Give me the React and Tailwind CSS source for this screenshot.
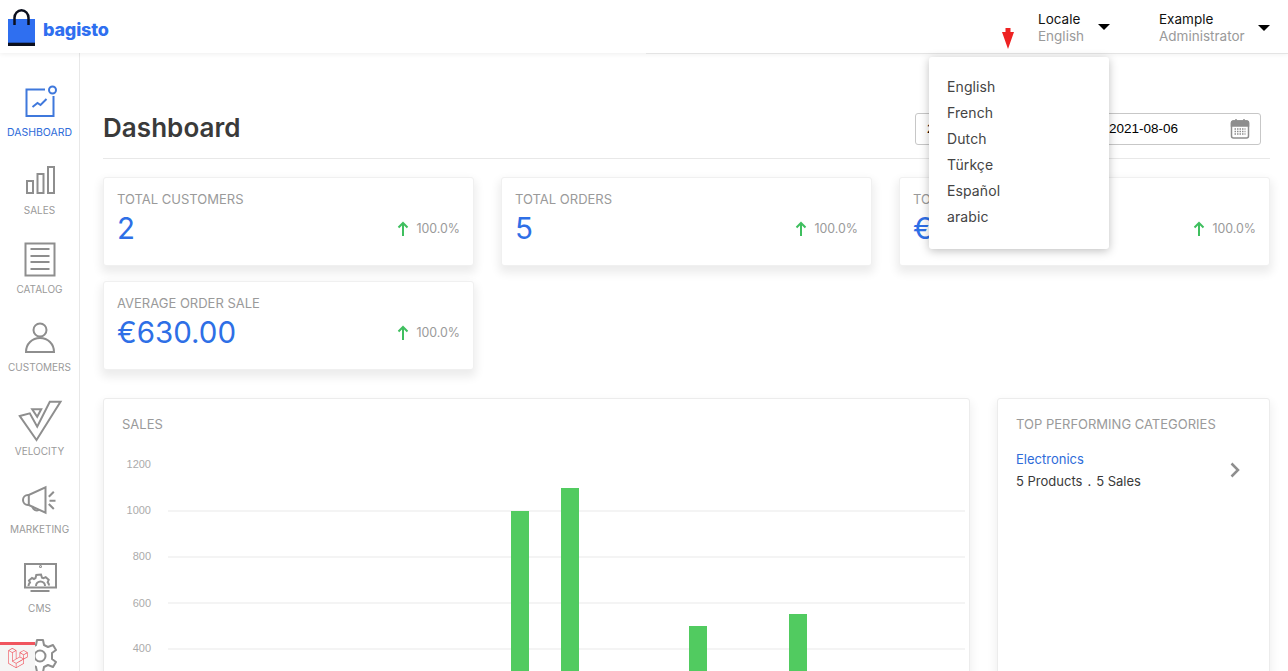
import { SiLaravel } from "react-icons/si";

const gray = "#8e8e8e";

function Ico({ children, color = gray, sw = 2 }) {
  return (
    <svg width="48" height="48" viewBox="0 0 48 48" fill="none" stroke={color} strokeWidth={sw}>
      {children}
    </svg>
  );
}

const navItems = [
  { label: "DASHBOARD", cls: "mt-[25px] text-[#2e6bd9]", text: "text-[10.500px] mt-px", icon: (
    <Ico color="#3f78dc">
      <path d="M29 11.500H10.500V38H37.500V18" />
      <circle cx="36.500" cy="12" r="3.500" />
      <path d="M16.500 29l5-4 3 2 6-6" />
    </Ico>) },
  { label: "SALES", cls: "mt-[17px] text-[#9a9a9a]", text: "text-[10px]", icon: (
    <Ico>
      <rect x="11" y="25" width="6" height="12" />
      <rect x="21.500" y="18" width="6" height="19" />
      <rect x="32" y="11" width="6" height="26" />
    </Ico>) },
  { label: "CATALOG", cls: "mt-[19px] text-[#9a9a9a]", text: "text-[10px]", icon: (
    <Ico>
      <rect x="9.500" y="8.500" width="29" height="32" />
      <path d="M14.500 14h19M14.500 21h19M14.500 27h19M14.500 34h19" />
    </Ico>) },
  { label: "CUSTOMERS", cls: "mt-[18px] text-[#9a9a9a]", text: "text-[10px]", icon: (
    <Ico>
      <circle cx="24" cy="17" r="6.500" />
      <path d="M10 39h28c0-8-6-14-14-14s-14 6-14 14z" />
    </Ico>) },
  { label: "VELOCITY", cls: "mt-[24px] text-[#9a9a9a]", text: "text-[10px]", icon: (
    <Ico>
      <path d="M3.800 19l10-2.700 7.400 13.400L33.800 4.700h10.700L20.500 43z" />
      <path d="M16.200 12.300h9l-4 7.400z" />
    </Ico>) },
  { label: "MARKETING", cls: "mt-[18px] text-[#9a9a9a]", text: "text-[10px]", icon: (
    <Ico>
      <path d="M29.500 12.300V37.700L12.800 30H12a5 5 0 0 1 0-10h.8z" />
      <path d="M12.800 20v10" />
      <path d="M16.200 31c.5 3.500 4 5.500 6.600 4" />
      <path d="M32.800 21.700l5-5M33.500 25.700h6M32.800 29l5 5" />
    </Ico>) },
  { label: "CMS", cls: "mt-[18px] text-[#9a9a9a]", text: "text-[10px] mt-px", icon: (
    <Ico>
      <rect x="9" y="11" width="31" height="23.500" />
      <path d="M14.500 38h19" />
      <path d="M12.500 33c0-2 .5-2.500 1.500-3.500l-1-2 3-2.500 2 1 1.500-.8.8-3.200 4.700-.5 1 3.200 1.500.5 2.200-1 3 2.500-1 2.500c.8.800 1.300 1.500 1.300 3.300" />
      <path d="M20 33a4.500 4.500 0 0 1 9 0" />
      <circle cx="24.500" cy="13.500" r=".5" />
    </Ico>) },
];

function NavItem({ label, cls, text, icon }) {
  return (
    <div className={`flex flex-col items-center ${cls}`}>
      <div className="h-12 w-12 flex items-center justify-center">{icon}</div>
      <div className={`${text} leading-3 whitespace-nowrap`}>{label}</div>
    </div>
  );
}

function Stat({ title, value }) {
  return (
    <div className="relative h-[89px] bg-white rounded-[3px] border border-[#f0f0f0] shadow-[0_5px_10px_2px_rgba(0,0,0,0.08)] px-[13px] pt-[12px]">
      <div className="text-[13px] leading-[18px] text-[#9a9a9a] whitespace-nowrap">{title}</div>
      <div className="flex items-center justify-between">
        <div className="text-[29.500px] leading-[40px] text-[#2e6fe6]">{value}</div>
        <div className="flex items-center gap-[7px] text-[12.400px] text-[#9a9a9a] mt-[3px]">
          <svg width="12" height="16" viewBox="0 0 12 16" fill="none" stroke="#3fbf5f" strokeWidth="2">
            <path d="M6 15V2M1.500 6.500L6 2l4.500 4.500" />
          </svg>
          <span>100.0%</span>
        </div>
      </div>
    </div>
  );
}

function DateBox({ value }) {
  return (
    <div className="h-8 w-[164px] flex items-center justify-between pl-[11px] pr-[10px] bg-white border border-[#c7c7c7] rounded-[3px] text-[13.500px] text-black font-['Liberation_Sans',sans-serif]">
      <span>{value}</span>
      <svg width="20" height="22" viewBox="0 0 20 22" fill="none" stroke="#8e8e8e" strokeWidth="1.500">
        <path d="M1.500 8V5a2 2 0 0 1 2-2h13a2 2 0 0 1 2 2v3z" fill="#8e8e8e" />
        <rect x="1.500" y="3" width="17" height="17" rx="2" />
        <path d="M6 1v4M14 1v4" />
        <path d="M4.500 11h11M4.500 13.500h11M4.500 16h11" strokeDasharray="1.500 1" />
      </svg>
    </div>
  );
}

function Chart() {
  const gridY = [113, 159, 205, 251];
  const labels = [["1200", 66], ["1000", 112], ["800", 158], ["600", 205], ["400", 250]];
  const bars = [[407, 113], [457, 90], [585, 228], [685, 216]];
  return (
    <svg width="860" height="240" viewBox="0 0 860 240" className="absolute left-0 -top-[1px] overflow-visible">
      {gridY.map((y) => (
        <line key={y} x1="64" x2="861" y1={y} y2={y} stroke="#f0f0f0" strokeWidth="1.500" />
      ))}
      {labels.map(([t, y]) => (
        <text key={t} x="47" y={y + 4} textAnchor="end" fontSize="11" fill="#ababab" fontFamily="Liberation Sans, sans-serif">{t}</text>
      ))}
      {bars.map(([x, y]) => (
        <rect key={x} x={x} y={y} width="18" height="300" fill="#51cb60" />
      ))}
    </svg>
  );
}

export default function App() {
  return (
    <div className="relative h-screen w-full overflow-hidden bg-white font-['Inter',sans-serif]">
      <header className="relative z-10 h-[53px] flex items-start justify-between pr-[18px] bg-white shadow-[0_1px_5px_rgba(0,0,0,0.07)]">
        <div className="flex items-start ml-[8px] gap-[8px]">
          <svg width="27" height="37" viewBox="0 0 27 37" className="mt-[9px]">
            <rect x="0" y="10" width="27" height="27" fill="#2f6ff0" />
            <rect x="0" y="33.700" width="27" height="3.300" fill="#0b0f1e" />
            <path d="M6.500 16V8.800a7 7.500 0 0 1 14 0V16" fill="none" stroke="#0b0f1e" strokeWidth="2.500" />
          </svg>
          <span className="text-[18px] leading-[24px] font-extrabold text-[#2f6ff0] tracking-[-0.2px] mt-[18px]">bagisto</span>
        </div>
        <div className="flex items-start pt-[11px]">
          <div className="w-[121px] flex items-start">
            <div className="text-[13.500px] leading-[17px] w-[60px]">
              <div className="text-[#111]">Locale</div>
              <div className="text-[#9a9a9a]">English</div>
            </div>
            <span className="mt-[13px] w-0 h-0 border-x-[6px] border-x-transparent border-t-[6px] border-t-black" />
          </div>
          <div className="flex items-start">
            <div className="text-[13.500px] leading-[17px] w-[99px]">
              <div className="text-[#111]">Example</div>
              <div className="text-[#9a9a9a]">Administrator</div>
            </div>
            <span className="mt-[14px] w-0 h-0 border-x-[6.500px] border-x-transparent border-t-[6px] border-t-black" />
          </div>
        </div>
        <div className="absolute left-[646px] right-0 top-[53px] h-px bg-[#e4e4e4]" />
      </header>

      <div className="flex h-[618px]">
        <aside className="w-[80px] shrink-0 border-r border-[#e8e8e8] flex flex-col">
          {navItems.map((n) => <NavItem key={n.label} {...n} />)}
          <div className="mt-[24px] flex justify-center">
            <svg width="36" height="36" viewBox="0 0 36 36" fill="none" stroke={gray} strokeWidth="2" strokeLinejoin="round">
              <circle cx="18" cy="18" r="5.500" />
              <path d="M15 2h6l1 5 4 2 5-2 3 5-4 3v6l4 3-3 5-5-2-4 2-1 5h-6l-1-5-4-2-5 2-3-5 4-3v-6L2 12l3-5 5 2 4-2z" />
            </svg>
          </div>
        </aside>

        <main className="flex-1 pl-[23px] pr-[18px] min-w-0">
          <div className="h-[106px] pt-[61px] border-b border-[#e8e8e8] flex items-start justify-between">
            <h1 className="text-[26px] leading-[28px] font-semibold text-[#3a3a3a] tracking-[0.05px]">Dashboard</h1>
            <div className="flex gap-[18px] mr-[9px] -mt-[1px]">
              <DateBox value="2021-07-07" />
              <DateBox value="2021-08-06" />
            </div>
          </div>

          <div className="grid grid-cols-3 gap-x-[27px] gap-y-[15px] mt-[18px]">
            <Stat title="TOTAL CUSTOMERS" value="2" />
            <Stat title="TOTAL ORDERS" value="5" />
            <Stat title="TOTAL SALE" value="€3,150.00" />
            <Stat title="AVERAGE ORDER SALE" value="€630.00" />
          </div>

          <div className="flex gap-[27px] mt-[28px]">
            <section className="relative w-[867px] h-[320px] bg-white rounded-[3px] border border-[#ececec] shadow-[0_5px_10px_2px_rgba(0,0,0,0.06)] px-[18px] pt-[16px]">
              <div className="text-[13px] leading-[18px] text-[#9a9a9a]">SALES</div>
              <Chart />
            </section>
            <section className="relative flex-1 h-[320px] bg-white rounded-[3px] border border-[#ececec] shadow-[0_5px_10px_2px_rgba(0,0,0,0.06)] px-[18px] pt-[16px]">
              <div className="text-[13px] leading-[18px] text-[#9a9a9a] whitespace-nowrap">TOP PERFORMING CATEGORIES</div>
              <div className="flex items-center justify-between mt-[15px] pr-[11px]">
                <div className="text-[13px] leading-[22px]">
                  <div className="text-[#2e6bd9]">Electronics</div>
                  <div className="text-[#3a3a3a]">5 Products<span className="mx-[5px]">.</span>5 Sales</div>
                </div>
                <svg width="10" height="16" viewBox="0 0 10 16" fill="none" stroke="#8e8e8e" strokeWidth="2.500">
                  <path d="M1.500 1.500L8 8l-6.500 6.500" />
                </svg>
              </div>
            </section>
          </div>
        </main>
      </div>

      <div className="absolute z-20 left-[929px] top-[57px] w-[180px] h-[192px] bg-white rounded-[3px] shadow-[0_2px_10px_rgba(0,0,0,0.25)] pl-[18px] pt-[17px]">
        {["English", "French", "Dutch", "Türkçe", "Español", "arabic"].map((t) => (
          <div key={t} className="h-[26px] leading-[26px] text-[14px] tracking-[0.1px] text-[#444]">{t}</div>
        ))}
      </div>

      <svg width="14" height="22" viewBox="0 0 14 22" className="absolute z-20 left-[1001px] top-[28px]">
        <path d="M4.500 0h5v4H13L7 21 1 4h3.500z" fill="#ee2222" />
      </svg>

      <div className="absolute z-30 left-0 top-[642px] w-[35px] h-[29px] bg-[#f5f5f5] border-t-[3px] border-t-[#f0555f] flex items-center justify-center">
        <SiLaravel size={20} color="#f0555f" />
      </div>
    </div>
  );
}
